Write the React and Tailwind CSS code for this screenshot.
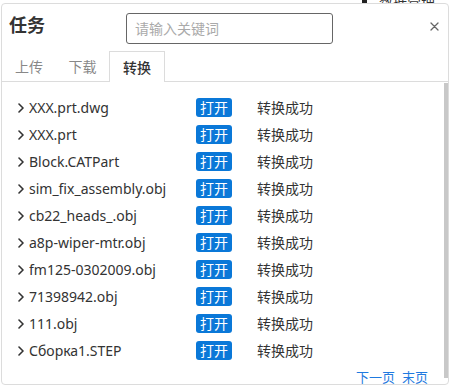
import React from 'react';

const files = [
  'XXX.prt.dwg',
  'XXX.prt',
  'Block.CATPart',
  'sim_fix_assembly.obj',
  'cb22_heads_.obj',
  'a8p-wiper-mtr.obj',
  'fm125-0302009.obj',
  '71398942.obj',
  '111.obj',
  'Сборка1.STEP',
];

const Chevron = () => (
  <svg width="6" height="10" viewBox="0 0 6 10" className="shrink-0">
    <path d="M1 1 L5 5 L1 9" fill="none" stroke="#333" strokeWidth="1.6" strokeLinecap="round" strokeLinejoin="round" />
  </svg>
);

export default function App() {
  return (
    <div
      className="relative w-[450px] h-[386px] bg-white overflow-hidden"
      style={{ fontFamily: '"Noto Sans", "Noto Sans CJK SC", sans-serif' }}
    >
      {/* page content behind the popup */}
      <div className="absolute top-[-9px] left-[362px] flex items-center gap-[12px] text-[14px] text-[#333]">
        <span className="inline-block w-[5px] h-[12px] bg-[#222]" />
        <span>数据管理</span>
      </div>

      <div className="relative mt-[3px] ml-[1px] w-[448px] h-[382px] bg-white border border-[#dcdcdc] rounded-[4px] flex flex-col overflow-hidden">
        {/* header */}
        <div className="h-[47px] shrink-0 flex items-center pl-[7px]">
          <div className="w-[117px] mb-[5px] text-[18px] font-bold text-[#333] leading-none">任务</div>
          <div className="w-[207px] h-[31px] mt-[2px] border border-[#666] rounded-[3px] flex items-center px-[8px] text-[14px] text-[#aaa]">
            请输入关键词
          </div>
          <div className="flex-1" />
          <button className="mr-[8px] mb-[2px] w-[12px] h-[12px] flex items-center justify-center">
            <svg width="9" height="9" viewBox="0 0 9 9">
              <path d="M1 1 L8 8 M8 1 L1 8" stroke="#666" strokeWidth="1.3" strokeLinecap="round" />
            </svg>
          </button>
        </div>

        {/* tabs */}
        <div className="h-[31px] shrink-0 flex border-b border-[#dcdcdc] text-[14px]">
          <div className="w-[54px] flex items-center justify-center text-[#888]">上传</div>
          <div className="w-[53px] flex items-center justify-center text-[#888]">下载</div>
          <div className="w-[56px] h-[31px] bg-white border-x border-t border-[#dcdcdc] flex items-center justify-center text-[#333] font-medium">
            转换
          </div>
        </div>

        {/* list */}
        <div className="relative flex-1 pt-[12px]">
          {files.map((name) => (
            <div key={name} className="h-[27px] flex items-center pl-[16px] text-[14px] text-[#333]">
              <Chevron />
              <div className="ml-[5px] w-[167px] truncate leading-[20px]">{name}</div>
              <button className="w-[36px] h-[19px] rounded-[3px] bg-[#0a78d8] text-white text-[14px] leading-none flex items-center justify-center">
                打开
              </button>
              <div className="ml-[25px] leading-[20px]">转换成功</div>
            </div>
          ))}
          <div className="mt-[5px] flex justify-end gap-[7px] pr-[20px] text-[13px] leading-[16px] text-[#1f7ae0]">
            <span>下一页</span>
            <span>末页</span>
          </div>
          <div className="absolute right-0 top-[1px] w-[4px] h-[295px] bg-[#c8c8c8]" />
        </div>
      </div>
    </div>
  );
}
